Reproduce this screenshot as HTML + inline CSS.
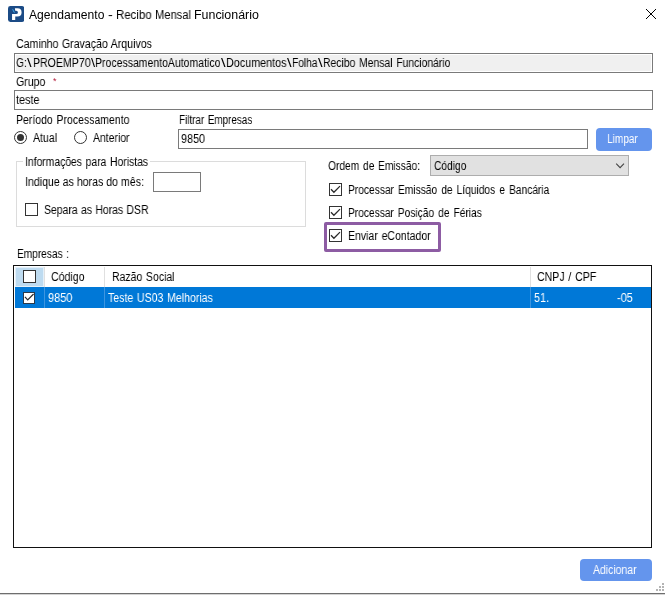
<!DOCTYPE html>
<html lang="pt-BR"><head><meta charset="utf-8"><title>Agendamento - Recibo Mensal Funcionário</title>
<style>
html,body{margin:0;padding:0;background:#fff;}
body{width:665px;height:595px;overflow:hidden;font-family:"Liberation Sans",sans-serif;font-size:12.5px;color:#000;}
#win{position:relative;width:665px;height:595px;background:#fff;overflow:hidden;}
#win>*{position:absolute;box-sizing:border-box;}
.t{word-spacing:1.0px;will-change:transform;white-space:pre;line-height:16px;transform-origin:0 0;display:block;}
.inp{border:1px solid #7a7a7a;background:#fff;}
.cb{width:13px;height:13px;border:1px solid #333;background:#fff;}
.rd{width:13px;height:13px;border:1px solid #333;border-radius:50%;background:#fff;}
.btn{background:#6495ed;border-radius:4px;}
.l{white-space:pre;line-height:16px;word-spacing:1.0px;}
.s{display:inline-block;will-change:transform;transform-origin:0 0;white-space:pre;line-height:16px;vertical-align:baseline;}

</style></head>
<body>
<div id="win">
<svg style="left:8px;top:5.85px" width="16.3" height="16" viewBox="0 0 16.3 16"><rect width="16.3" height="16" rx="2.4" fill="#1b4b86"/><path d="M4.05 13.95V8.1H8.3A1.6 1.6 0 0 0 8.3 4.85H7.2L6.9 2.35H9.5A4.1 4.1 0 0 1 9.5 10.55H7.24V13.95Z" fill="#fff"/><path d="M4 2.7L5.3 3.6L6.9 6.6L6.4 7.1L5.1 5.4Z" fill="#3b9ddd"/></svg>
<svg style="left:645px;top:8px" width="12" height="12" viewBox="0 0 12 12"><path d="M1 1l10 10M11 1L1 11" stroke="#000" stroke-width="1" fill="none"/></svg>
<div class="inp" style="left:14px;top:53px;width:639px;height:20px;padding:1px;background:#f0f0f0;background-clip:content-box"></div>
<span class="t" style="left:52.7px;top:76px;color:#b5203d;font-size:9px;line-height:10px">*</span>
<div class="inp" style="left:14px;top:90px;width:639px;height:20px"></div>
<div class="rd" style="left:14px;top:131px"></div>
<div style="left:17px;top:134px;width:7px;height:7px;border-radius:50%;background:#333"></div>
<div class="rd" style="left:74px;top:131px"></div>
<div class="inp" style="left:178px;top:129px;width:410px;height:20px"></div>
<div class="btn" style="left:595.5px;top:127.5px;width:56px;height:23px"></div>
<div style="left:16px;top:161px;width:290px;height:66px;border:1px solid #dcdcdc"></div>
<div style="left:23px;top:160px;width:127px;height:3px;background:#fff"></div>
<div class="inp" style="left:153px;top:172px;width:48px;height:20px"></div>
<div class="cb" style="left:25px;top:203px"></div>
<div class="inp" style="left:430px;top:155px;width:199px;height:21px;background:#e1e1e1;border-color:#adadad"></div>
<svg style="left:614px;top:162px" width="12" height="8" viewBox="0 0 12 8"><path d="M2.2 1.7l3.9 3.9L10 1.7" stroke="#444" stroke-width="1.1" fill="none"/></svg>
<div class="cb" style="left:329px;top:183px"></div>
<div class="cb" style="left:329px;top:206px"></div>
<div class="cb" style="left:329px;top:229px"></div>
<svg style="left:329px;top:183px" width="13" height="13" viewBox="0 0 13 13"><path d="M2 6.2L4.9 9.3L11 3.1" stroke="#2a2a2a" stroke-width="1.25" fill="none"/></svg>
<svg style="left:329px;top:206px" width="13" height="13" viewBox="0 0 13 13"><path d="M2 6.2L4.9 9.3L11 3.1" stroke="#2a2a2a" stroke-width="1.25" fill="none"/></svg>
<svg style="left:329px;top:229px" width="13" height="13" viewBox="0 0 13 13"><path d="M2 6.2L4.9 9.3L11 3.1" stroke="#2a2a2a" stroke-width="1.25" fill="none"/></svg>
<div style="left:324px;top:222px;width:117px;height:30px;border:3px solid #8d5ca3;border-radius:2px"></div>
<div style="left:13px;top:265px;width:639px;height:283px;border:1px solid #111;background:#fff"></div>
<div style="left:15px;top:267px;width:29px;height:20px;background:#bedbf0;border:1px solid #e3f0fa"></div>
<div style="left:15px;top:286.5px;width:635.5px;height:21.5px;background:#0078d7"></div>
<div style="left:44px;top:267px;width:1px;height:20px;background:#e0e0e0"></div>
<div style="left:104px;top:267px;width:1px;height:20px;background:#e0e0e0"></div>
<div style="left:530px;top:267px;width:1px;height:20px;background:#e0e0e0"></div>
<div style="left:44px;top:287px;width:1px;height:21px;background:#3d95e0"></div>
<div style="left:104px;top:287px;width:1px;height:21px;background:#3d95e0"></div>
<div style="left:530px;top:287px;width:1px;height:21px;background:#3d95e0"></div>
<div class="cb" style="left:23px;top:270px"></div>
<div class="cb" style="left:23px;top:291.5px;width:12px;height:12px;border-color:#2b3a4a"></div>
<svg style="left:23px;top:291px" width="12.5" height="12.5" viewBox="0 0 13 13"><path d="M2 6.2L4.9 9.3L11 3.1" stroke="#2a2a2a" stroke-width="1.25" fill="none"/></svg>
<div class="btn" style="left:579.5px;top:558.5px;width:72.5px;height:22.5px"></div>
<div style="left:0;top:593px;width:665px;height:1px;background:#6e6e6e"></div>
<div style="left:0;top:594px;width:665px;height:1px;background:#d4d4d4"></div>
<svg style="left:655px;top:582px" width="10" height="10" viewBox="0 0 10 10" fill="#b4b4b4"><rect x="7" y="1" width="2" height="2"/><rect x="4" y="4" width="2" height="2"/><rect x="7" y="4" width="2" height="2"/><rect x="1" y="7" width="2" height="2"/><rect x="4" y="7" width="2" height="2"/><rect x="7" y="7" width="2" height="2"/></svg>

<div class="l" style="left:28.80px;top:6.88px;font-size:12px;word-spacing:0;"><span class="s" style="width:79.70px;transform:scaleX(1.0089)">Agendamento </span><span class="s" style="width:7.90px;transform:scaleX(1.2000)">- </span><span class="s" style="width:39.10px;transform:scaleX(0.9529)">Recibo </span><span class="s" style="width:38.70px;transform:scaleX(0.9305)">Mensal </span><span class="s" style="width:64.90px;transform:scaleX(1.0350)">Funcionário</span></div>
<span class="t" style="left:15.90px;top:36.00px;word-spacing:0.5px;transform:scaleX(0.8488)">Caminho Gravação Arquivos</span>
<div class="l" style="left:16.30px;top:54.60px;"><span class="s" style="width:11.10px;transform:scaleX(0.8104)">G:</span><span class="s" style="width:5.60px;transform:scaleX(1.3202)">\</span><span class="s" style="width:57.70px;transform:scaleX(0.8459)">PROEMP70</span><span class="s" style="width:4.50px;transform:scaleX(1.1767)">\</span><span class="s" style="width:125.80px;transform:scaleX(0.8394)">ProcessamentoAutomatico</span><span class="s" style="width:5.30px;transform:scaleX(1.3202)">\</span><span class="s" style="width:60.80px;transform:scaleX(0.8620)">Documentos</span><span class="s" style="width:5.30px;transform:scaleX(1.3202)">\</span><span class="s" style="width:25.80px;transform:scaleX(0.8152)">Folha</span><span class="s" style="width:5.30px;transform:scaleX(1.3202)">\</span><span class="s" style="width:127.40px;transform:scaleX(0.8301)">Recibo Mensal Funcionário</span></div>
<span class="t" style="left:16.00px;top:73.80px;transform:scaleX(0.8432)">Grupo</span>
<span class="t" style="left:16.00px;top:91.70px;transform:scaleX(0.8632)">teste</span>
<span class="t" style="left:15.80px;top:112.40px;transform:scaleX(0.8393)">Período Processamento</span>
<span class="t" style="left:179.40px;top:112.20px;transform:scaleX(0.7898)">Filtrar Empresas</span>
<span class="t" style="left:32.70px;top:130.30px;transform:scaleX(0.8456)">Atual</span>
<span class="t" style="left:92.70px;top:130.30px;transform:scaleX(0.8337)">Anterior</span>
<span class="t" style="left:180.90px;top:131.30px;transform:scaleX(0.8665)">9850</span>
<span class="t" style="left:607.20px;top:131.00px;color:#fff;transform:scaleX(0.8059)">Limpar</span>
<span class="t" style="left:24.70px;top:154.40px;transform:scaleX(0.8278)">Informações para Horistas</span>
<span class="t" style="left:24.70px;top:174.00px;word-spacing:0px;transform:scaleX(0.8470)">Indique as horas do mês:</span>
<span class="t" style="left:43.90px;top:202.20px;word-spacing:0.5px;transform:scaleX(0.8349)">Separa as Horas DSR</span>
<span class="t" style="left:328.10px;top:158.00px;transform:scaleX(0.8189)">Ordem de Emissão:</span>
<span class="t" style="left:434.10px;top:158.00px;transform:scaleX(0.8151)">Código</span>
<span class="t" style="left:348.10px;top:182.20px;word-spacing:1.5px;transform:scaleX(0.8166)">Processar Emissão de Líquidos e Bancária</span>
<span class="t" style="left:348.10px;top:205.00px;word-spacing:1.5px;transform:scaleX(0.8144)">Processar Posição de Férias</span>
<span class="t" style="left:348.10px;top:228.00px;transform:scaleX(0.8415)">Enviar eContador</span>
<span class="t" style="left:16.90px;top:246.00px;transform:scaleX(0.8113)">Empresas :</span>
<span class="t" style="left:51.20px;top:268.60px;transform:scaleX(0.8454)">Código</span>
<span class="t" style="left:112.00px;top:268.70px;transform:scaleX(0.8372)">Razão Social</span>
<span class="t" style="left:536.90px;top:268.60px;transform:scaleX(0.8464)">CNPJ / CPF</span>
<span class="t" style="left:47.80px;top:289.50px;color:#fff;transform:scaleX(0.8773)">9850</span>
<span class="t" style="left:108.20px;top:289.70px;color:#fff;transform:scaleX(0.8432)">Teste US03 Melhorias</span>
<span class="t" style="left:533.90px;top:289.70px;color:#fff;transform:scaleX(0.8625)">51.</span>
<span class="t" style="left:616.60px;top:289.70px;color:#fff;transform:scaleX(0.8740)">-05</span>
<span class="t" style="left:592.80px;top:561.90px;color:#fff;transform:scaleX(0.8365)">Adicionar</span>
</div>
</body></html>
